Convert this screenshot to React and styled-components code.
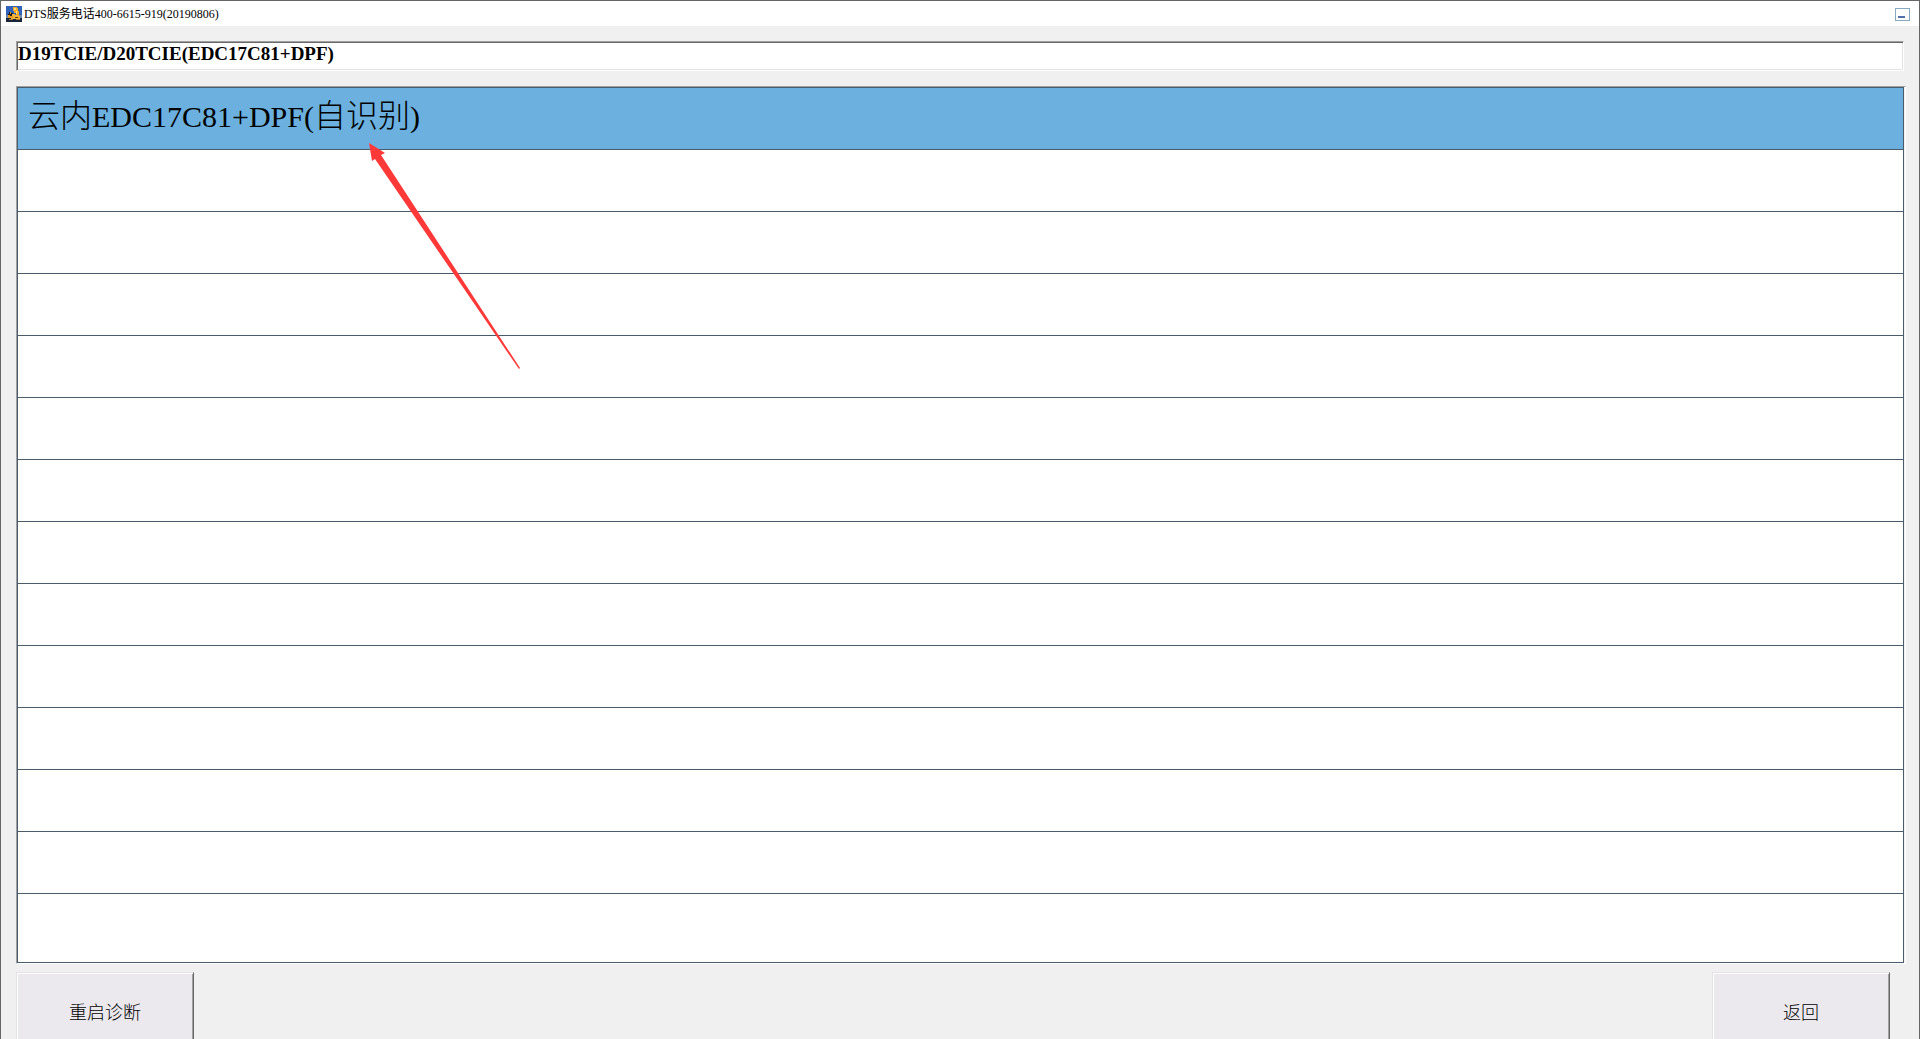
import React, { useState } from "react";
import styled, { createGlobalStyle } from "styled-components";

const serif = `"Liberation Serif", "Noto Sans CJK SC", serif`;

const GlobalStyle = createGlobalStyle`
  *, *::before, *::after { box-sizing: border-box; }
  html, body { margin: 0; height: 100%; overflow: hidden; background: #f0f0f0; }
  body { font-family: ${serif}; color: #000; }
`;

const Window = styled.div`
  position: relative;
  min-height: 100vh;
  border: 1px solid #666;
  border-bottom: 0;
  background: #f0f0f0;
`;

const TitleBar = styled.header`
  display: flex;
  align-items: center;
  height: 25px;
  padding: 0 9px 0 5px;
  background: #fff;
`;

const Title = styled.h1`
  flex: 1;
  margin: 0 0 0 2px;
  font-size: 12px;
  line-height: 16px;
  font-weight: 400;
`;

const Minimize = styled.button`
  display: flex;
  align-items: flex-end;
  width: 15px;
  height: 13px;
  margin-top: 2px;
  padding: 0 2px 2px;
  border: 1px solid #86a8c0;
  background: #fff;

  &::after {
    content: "";
    width: 7px;
    height: 2px;
    background: #5470a8;
  }
`;

const Content = styled.main`
  padding: 15px 13px 0 15px;
`;

const PathField = styled.input`
  display: block;
  width: calc(100% - 2px);
  height: 30px;
  padding: 0 0 4px;
  border: 1px solid;
  border-color: #a0a0a0 #fff #fff #a0a0a0;
  border-radius: 0;
  outline: 0;
  box-shadow: inset 1px 1px #696969, inset -1px -1px #e3e3e3;
  background: #fff;
  color: #000;
  font-family: ${serif};
  font-size: 19px;
  font-weight: 700;
  line-height: 22px;
  text-indent: 1px;
`;

const ListFrame = styled.div`
  margin-top: 15px;
  border: 1px solid;
  border-color: #a0a0a0 #fff #fff #a0a0a0;
  padding-right: 1px;
`;

const List = styled.ul`
  margin: 0;
  padding: 0;
  list-style: none;
  border: 1px solid #4a5c6a;
  background: #fff;
`;

const Row = styled.li`
  height: 62px;
  border-bottom: 1px solid #4a5c6a;

  &:last-child {
    height: 68px;
    border-bottom: 0;
  }
`;

const RowButton = styled.button`
  display: block;
  width: 100%;
  height: 100%;
  padding: 0 10px 4px;
  border: 0;
  background: ${(p) => (p.$selected ? "#6bb0de" : "#fff")};
  color: #000;
  font-family: ${serif};
  font-size: 32px;
  font-weight: 300;
  line-height: 40px;
  text-align: left;
`;

const Latin = styled.span`
  font-size: 30px;
`;

const Actions = styled.footer`
  display: flex;
  justify-content: space-between;
  padding: 8px 16px 0 0;
`;

const ActionButton = styled.button`
  width: 178px;
  height: 80px;
  padding: 0 0 2px;
  border: 1px solid;
  border-color: #e3e3e3 #696969 #696969 #e3e3e3;
  box-shadow: inset 1px 1px #fff, inset -1px -1px #a0a0a0;
  background: #ebe8ee;
  color: #000;
  font-family: ${serif};
  font-size: 18px;
  font-weight: 300;
`;

const Pointer = styled.svg`
  position: absolute;
  left: 368px;
  top: 142px;
  pointer-events: none;
`;

function AppIcon() {
  return (
    <svg width="16" height="16" viewBox="0 0 16 16" shapeRendering="crispEdges" aria-hidden="true">
      <rect width="16" height="16" fill="#2f62b8" />
      <path d="M0 9h2v3H0zM13 9h3v3h-3z" fill="#7185ad" />
      <path d="M0 12h2v-1h12v1h2v4H0z" fill="#17243a" />
      <path d="M7 1h4v1h1v3h1v5h-3V7H8V5H7z" fill="#f0a826" />
      <path d="M8 2h2v2H8zM10 5h1v3h-1z" fill="#ffe07a" />
      <path d="M3 6h2v1h2v2h2v3H2V8h1z" fill="#20180f" />
      <path d="M2 9h2v1h3v2H2zM4 6h1v2H4z" fill="#e39a1e" />
      <path d="M6 8h3v1h3v1h2v3H5v-1h2z" fill="#f2b436" />
      <path d="M9 11h3v1H9z" fill="#5c3a10" />
      <path d="M3 13h4v1H3zM10 13h4v1h-4z" fill="#b87a28" />
    </svg>
  );
}

const items = [
  <>
    云内<Latin>EDC17C81+DPF(</Latin>自识别<Latin>)</Latin>
  </>,
  ...Array(13).fill(null),
];

export default function App() {
  const [selected, setSelected] = useState(0);
  return (
    <>
      <GlobalStyle />
      <Window>
        <TitleBar>
          <AppIcon />
          <Title>DTS服务电话400-6615-919(20190806)</Title>
          <Minimize type="button" aria-label="最小化" />
        </TitleBar>
        <Content>
          <PathField readOnly aria-label="路径" value="D19TCIE/D20TCIE(EDC17C81+DPF)" />
          <ListFrame>
            <List>
              {items.map((item, i) => (
                <Row key={i}>
                  {item && (
                    <RowButton type="button" $selected={i === selected} onClick={() => setSelected(i)}>
                      {item}
                    </RowButton>
                  )}
                </Row>
              ))}
            </List>
          </ListFrame>
          <Actions>
            <ActionButton type="button">重启诊断</ActionButton>
            <ActionButton type="button">返回</ActionButton>
          </Actions>
        </Content>
        <Pointer width="152" height="228" viewBox="0 0 152 228" aria-hidden="true">
          <path d="M0 0L16 10L12 12L151 225L150 226L6 16L3 18Z" fill="#ff3838" />
        </Pointer>
      </Window>
    </>
  );
}
